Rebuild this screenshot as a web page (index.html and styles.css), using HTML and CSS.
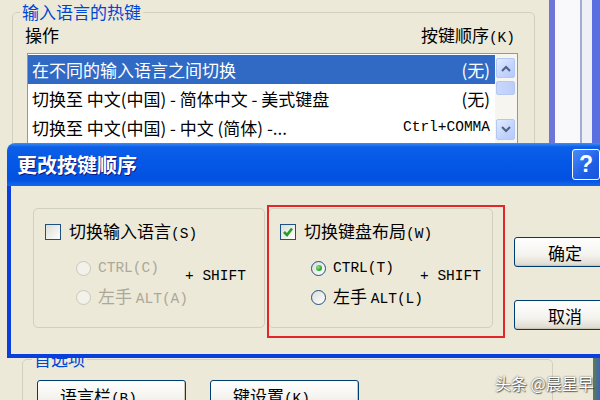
FILE: index.html
```html
<!DOCTYPE html>
<html lang="zh-CN">
<head>
    <meta charset="UTF-8">
    <meta name="viewport" content="width=device-width, initial-scale=1.0">
    <title>更改按键顺序</title>
    <link rel="stylesheet" href="styles.css">
</head>
<body>
    <div class="desk">
        <div class="settings">
            <fieldset class="group hotkeys">
                <legend>输入语言的热键</legend>
                <div class="list-head">
                    <span>操作</span>
                    <span>按键顺序<span class="en">(K)</span></span>
                </div>
                <div class="listbox">
                    <div class="rows">
                        <div class="row selected"><span>在不同的输入语言之间切换</span><span>(无)</span></div>
                        <div class="row"><span>切换至 中文(中国) - 简体中文 - 美式键盘</span><span>(无)</span></div>
                        <div class="row"><span>切换至 中文(中国) - 中文 (简体) -...</span><span class="en">Ctrl+COMMA</span></div>
                    </div>
                    <div class="scrollbar">
                        <div class="sb-btn">
                            <svg width="10" height="7" viewBox="0 0 10 7"><path d="M1 6 L5 2 L9 6" fill="none" stroke="#4d6185" stroke-width="2"/></svg>
                        </div>
                        <div class="sb-thumb"></div>
                        <div class="sb-btn down">
                            <svg width="10" height="7" viewBox="0 0 10 7"><path d="M1 1 L5 5 L9 1" fill="none" stroke="#4d6185" stroke-width="2"/></svg>
                        </div>
                    </div>
                </div>
            </fieldset>

            <fieldset class="group prefs">
                <legend>首选项</legend>
                <div class="prefs-buttons">
                    <button class="xp-btn wide">语言栏<span class="en">(B)...</span></button>
                    <button class="xp-btn wide">键设置<span class="en">(K)...</span></button>
                </div>
            </fieldset>
        </div>

        <div class="other-window"></div>
        <div class="corner-strip"></div>

        <div class="dialog">
            <div class="titlebar">
                <span>更改按键顺序</span>
                <div class="help">?</div>
            </div>
            <div class="frame">
                <div class="client">
                    <div class="choices">
                        <div class="choice left">
                            <div class="check-row">
                                <span class="checkbox"></span>
                                <span>切换输入语言<span class="en">(S)</span></span>
                            </div>
                            <div class="options disabled">
                                <div class="radios">
                                    <div class="radio-row"><span class="radio"></span><span class="en">CTRL(C)</span></div>
                                    <div class="radio-row"><span class="radio"></span><span>左手 <span class="en">ALT(A)</span></span></div>
                                </div>
                                <span class="shift en">+ SHIFT</span>
                            </div>
                        </div>
                        <div class="choice right">
                            <div class="check-row">
                                <span class="checkbox">
                                    <svg width="14" height="14" viewBox="0 0 14 14"><path d="M3 7 L6 10 L11 3.5" fill="none" stroke="#21a121" stroke-width="2.6"/></svg>
                                </span>
                                <span>切换键盘布局<span class="en">(W)</span></span>
                            </div>
                            <div class="options">
                                <div class="radios">
                                    <div class="radio-row"><span class="radio on"></span><span class="en">CTRL(T)</span></div>
                                    <div class="radio-row"><span class="radio"></span><span>左手 <span class="en">ALT(L)</span></span></div>
                                </div>
                                <span class="shift en">+ SHIFT</span>
                            </div>
                        </div>
                    </div>
                    <div class="dialog-buttons">
                        <button class="xp-btn">确定</button>
                        <button class="xp-btn">取消</button>
                    </div>
                </div>
            </div>
        </div>

        <div class="mark"></div>
        <div class="watermark">头条 @晨星早</div>
    </div>
</body>
</html>
```

FILE: styles.css
```css
body {
    margin: 0;
    background: #ece9d8;
    font-family: "Noto Sans CJK SC", sans-serif;
    font-size: 17px;
    color: #000;
}
.desk {
    position: relative;
    width: 600px;
    height: 400px;
    overflow: hidden;
}
.en {
    font-family: "Liberation Mono", monospace;
    font-size: 14.5px;
}

/* window behind the dialog */
.settings {
    padding: 2px 0 0 12px;
}
.group {
    margin: 0;
    border: 1px solid #d0d0bf;
    border-radius: 5px;
    box-sizing: border-box;
}
.group legend {
    color: #0046d5;
    line-height: 20px;
    padding: 0 2px;
}
.hotkeys {
    width: 523px;
    height: 320px;
    padding: 3px 16px 0 12px;
}
.hotkeys legend {
    margin-left: -5px;
}
.list-head {
    display: flex;
    justify-content: space-between;
    line-height: 20px;
    padding-right: 3px;
    margin-bottom: 5px;
}
.listbox {
    display: flex;
    margin-left: 2px;
    height: 93px;
    border: 1px solid #7f9db9;
    background: #fff;
    box-sizing: border-box;
}
.rows {
    flex: 1;
    padding-top: 1px;
}
.row {
    display: flex;
    justify-content: space-between;
    height: 29px;
    line-height: 29px;
    padding: 0 5px 0 4px;
    white-space: nowrap;
}
.row.selected {
    background: #316ac5;
    color: #fff;
}
.scrollbar {
    width: 19px;
    padding: 4px 2px 0 1px;
    background: #f6f5f0;
    display: flex;
    flex-direction: column;
}
.sb-btn {
    height: 20px;
    border: 1px solid #b4c8f6;
    border-radius: 2px;
    background: linear-gradient(135deg, #e2ebfe 0%, #c3d3fd 60%, #b6c9f7 100%);
    display: flex;
    justify-content: center;
    align-items: center;
    box-sizing: border-box;
}
.sb-btn.down {
    margin-top: 24px;
    height: 21px;
}
.sb-thumb {
    margin-top: 3px;
    height: 14px;
    border: 1px solid #b4c8f6;
    border-radius: 2px;
    background: linear-gradient(90deg, #c9d8fc, #bccdf9);
    box-sizing: border-box;
}
.prefs {
    margin: 27px 0 0 10px;
    width: 531px;
    height: 80px;
    padding: 11px 0 0 14px;
}
.prefs legend {
    margin-left: -5px;
}
.prefs-buttons {
    display: flex;
    gap: 24px;
}
.other-window {
    position: absolute;
    left: 549px;
    top: 0;
    width: 51px;
    height: 143px;
    background: linear-gradient(90deg, #6d75d9 0 6px, #f9f9fb 6px 31px, #a6accf 31px 33px, #eef0f8 33px 43px, #5a70e0 43px);
}
.corner-strip {
    position: absolute;
    left: 593px;
    top: 358px;
    width: 7px;
    height: 42px;
    background: linear-gradient(90deg, #5d7f45, #3b5fc8);
}

/* buttons */
.xp-btn {
    font: inherit;
    color: #000;
    height: 30px;
    width: 102px;
    padding: 0;
    border: 1px solid #003c74;
    border-radius: 3px;
    background: linear-gradient(180deg, #ffffff 0%, #f4f3ee 60%, #e3e0d6 90%, #d6d0c5 100%);
    box-shadow: inset -1px -1px 0 #c9c5b8;
}
.xp-btn.wide {
    width: 149px;
}

/* dialog */
.dialog {
    position: absolute;
    left: 7px;
    top: 143px;
    width: 600px;
    height: 215px;
    display: flex;
    flex-direction: column;
}
.titlebar {
    height: 43px;
    flex-shrink: 0;
    border-radius: 8px 8px 0 0;
    background: linear-gradient(180deg, #3d8ef6 0, #0b5fe8 4px, #0457e6 50%, #0251e0 85%, #1767ec 100%);
    display: flex;
    align-items: center;
    justify-content: space-between;
    padding-left: 10px;
    color: #fff;
    font-weight: bold;
    font-size: 20px;
    text-shadow: 1px 1px 0 #0a1882;
}
.help {
    width: 26px;
    height: 29px;
    margin-right: 7px;
    border: 1px solid #fff;
    border-radius: 3px;
    background: linear-gradient(135deg, #4a8cf8, #1e5fe6 60%, #1a55d8);
    text-align: center;
    line-height: 28px;
    font-family: "Liberation Sans", sans-serif;
    font-size: 23px;
    text-shadow: none;
}
.frame {
    flex: 1;
    display: flex;
    background: #0a3fdc;
    padding: 0 0 4px 4px;
}
.client {
    flex: 1;
    display: flex;
    align-items: flex-start;
    background: #ece9d8;
    padding: 22px 0 0 22px;
}
.choices {
    display: flex;
    gap: 3px;
}
.choice {
    height: 120px;
    border: 1px solid #d0d0bf;
    border-radius: 5px;
    padding: 14px 0 0 11px;
    box-sizing: border-box;
}
.choice.left {
    width: 232px;
}
.choice.right {
    width: 225px;
}
.check-row {
    display: flex;
    align-items: center;
    gap: 8px;
    height: 18px;
    line-height: 18px;
    white-space: nowrap;
}
.checkbox {
    width: 16px;
    height: 16px;
    border: 1px solid #1c5180;
    background: linear-gradient(135deg, #dcdcd7, #ffffff);
    box-sizing: border-box;
    display: flex;
    justify-content: center;
    align-items: center;
}
.options {
    display: flex;
    align-items: flex-start;
    margin: 18px 0 0 31px;
}
.radios {
    width: 109px;
    display: flex;
    flex-direction: column;
    gap: 11px;
}
.radio-row {
    display: flex;
    align-items: center;
    gap: 7px;
    height: 18px;
    line-height: 18px;
    white-space: nowrap;
}
.radio {
    width: 15px;
    height: 15px;
    flex-shrink: 0;
    border: 1px solid #1c5180;
    border-radius: 50%;
    background: linear-gradient(135deg, #dcdcd7, #ffffff);
    box-sizing: border-box;
    display: flex;
    justify-content: center;
    align-items: center;
}
.radio.on::after {
    content: "";
    width: 6px;
    height: 6px;
    border-radius: 50%;
    background: radial-gradient(circle at 35% 35%, #8ee28e, #21a121 70%);
}
.disabled .radio-row {
    color: #aca899;
}
.disabled .radio {
    border-color: #cac8bb;
    background: #f2f1ea;
}
.shift {
    margin-top: 9px;
    line-height: 16px;
    white-space: nowrap;
}
.dialog-buttons {
    display: flex;
    flex-direction: column;
    gap: 33px;
    margin: 29px 0 0 21px;
}

/* overlays */
.mark {
    position: absolute;
    left: 267px;
    top: 205px;
    width: 238px;
    height: 133px;
    border: 2px solid #e3262a;
    box-sizing: border-box;
}
.watermark {
    position: absolute;
    left: 495px;
    top: 371px;
    font-size: 16px;
    white-space: nowrap;
    color: #fff;
    text-shadow: 0 0 2px rgba(0, 0, 0, 0.7), 1px 1px 1px rgba(0, 0, 0, 0.5);
}
```
